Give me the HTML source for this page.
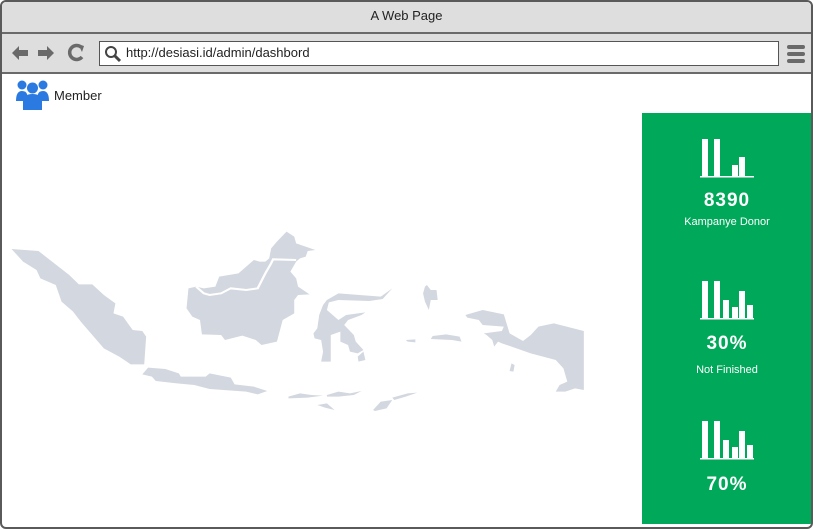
<!DOCTYPE html>
<html><head><style>
*{margin:0;padding:0;box-sizing:border-box}
body{width:813px;height:529px;background:#fff;font-family:"Liberation Sans",sans-serif;position:relative;overflow:hidden}
.win{position:absolute;left:0;top:0;width:813px;height:529px;border:2px solid #5a5a5a;border-radius:6px;overflow:hidden;background:#fff}
.title{position:absolute;left:0;top:0;width:100%;height:32px;background:#dedede;border-bottom:2px solid #6a6a6a;text-align:center;font-size:13px;line-height:28px;color:#222}
.tool{position:absolute;left:0;top:32px;width:100%;height:40px;background:#dedede;border-bottom:2px solid #6a6a6a}
.addr{position:absolute;left:97px;top:7px;width:680px;height:25px;border:1.5px solid #555;background:#fff;font-size:13px;line-height:22px;padding-left:26px;color:#222}
.green{position:absolute;left:640px;top:111px;width:170px;height:411px;background:#00a85a;color:#fff;text-align:center}
.num{position:absolute;left:0;width:100%;font-size:19px;font-weight:bold;letter-spacing:1px}
.lbl{position:absolute;left:0;width:100%;font-size:11px}
svg.m{position:absolute;left:-2px;top:223px;width:620px;height:220px;overflow:visible}
svg.m path{fill:#d3d7df}
</style></head><body>
<div class="win">
<div class="title">A Web Page</div>
<div class="tool">
<svg width="95" height="40" style="position:absolute;left:0;top:0">
<path d="M10 19 L17 12 L17 16 L26 16 L26 22 L17 22 L17 26 Z" fill="#6a6a6a"/>
<path d="M52 19 L45 12 L45 16 L36 16 L36 22 L45 22 L45 26 Z" fill="#6a6a6a"/>
<path d="M79 13 A7 7 0 1 0 80 23" stroke="#6a6a6a" stroke-width="3.5" fill="none"/>
<path d="M76 10 L82 12 L80 18 Z" fill="#6a6a6a"/>
</svg>
<div class="addr">http://desiasi.id/admin/dashbord
<svg width="20" height="20" style="position:absolute;left:4px;top:2px"><circle cx="7" cy="8" r="5" stroke="#444" stroke-width="2" fill="none"/><path d="M11 12 L16 17" stroke="#444" stroke-width="3"/></svg>
</div>
<svg width="22" height="22" style="position:absolute;left:784px;top:9px"><rect x="1" y="2" width="18" height="4" rx="2" fill="#6a6a6a"/><rect x="1" y="9" width="18" height="4" rx="2" fill="#6a6a6a"/><rect x="1" y="16" width="18" height="4" rx="2" fill="#6a6a6a"/></svg>
</div>
<svg width="34" height="32" style="position:absolute;left:14px;top:77px" fill="#2a7ae2">
<circle cx="6" cy="6" r="4.5"/><circle cx="27" cy="6" r="4.5"/><circle cx="16.5" cy="9" r="5.5"/>
<path d="M0 22 Q0 12 6 12 Q10 12 11 15 L11 22 Z"/><path d="M33 22 Q33 12 27 12 Q23 12 22 15 L22 22 Z"/>
<path d="M7 31 L7 22 Q7 15 16.5 15 Q26 15 26 22 L26 31 Z"/>
</svg>
<div style="position:absolute;left:52px;top:86px;font-size:13px;color:#222">Member</div>

<svg class="m"><g transform="scale(0.3846 0.3333)"><path d="M30 72 L100 78 L130 105 L180 150 L205 178 L240 178 L270 210 L300 235 L295 265 L320 275 L345 315 L370 318 L380 335 L375 418 L340 418 L310 395 L270 370 L240 330 L210 290 L190 260 L160 230 L145 180 L105 160 L95 135 L60 110 Z"/></g></svg>
<svg class="m"><g transform="scale(0.3846 0.3333)"><path d="M490 190 L485 250 L500 275 L520 285 L525 328 L575 330 L585 345 L630 332 L665 345 L680 360 L720 350 L735 285 L765 265 L765 225 L775 210 L805 208 L775 185 L770 160 L755 140 L770 110 L780 100 L795 95 L800 78 L820 75 L770 55 L765 35 L745 20 L720 50 L705 70 L700 100 L690 110 L675 110 L660 105 L620 145 L570 155 L560 185 L530 190 L510 185 Z"/><path d="M510 185 L530 205 L545 210 L575 205 L600 190 L640 195 L670 190 L690 145 L705 115 L710 103 L770 105" style="fill:none;stroke:#fff;stroke-width:6"/></g></svg>
<svg class="m"><g transform="scale(0.3846 0.3333)"><path d="M850 225 L880 205 L990 215 L1020 190 L995 222 L960 228 L880 225 L855 232 L850 255 L880 285 L900 270 L950 262 L940 270 L905 285 L895 300 L920 330 L925 350 L945 375 L930 385 L910 380 L905 360 L885 350 L885 320 L860 330 L860 410 L835 410 L840 380 L835 345 L818 340 L815 325 L825 310 L830 270 L840 240 Z"/></g></svg>
<svg class="m"><g transform="scale(0.3846 0.3333)"><path d="M930 395 L945 380 L950 405 L932 410 Z"/></g></svg>
<svg class="m"><g transform="scale(0.3846 0.3333)"><path d="M1105 185 L1110 180 L1120 195 L1135 195 L1138 225 L1120 225 L1115 255 L1105 230 L1100 205 Z"/></g></svg>
<svg class="m"><g transform="scale(0.3846 0.3333)"><path d="M1210 270 L1255 255 L1310 268 L1325 325 L1360 348 L1380 330 L1400 305 L1440 295 L1518 318 L1518 495 L1495 490 L1470 500 L1445 500 L1455 480 L1475 470 L1465 430 L1445 405 L1380 385 L1355 375 L1305 355 L1295 350 L1285 365 L1280 345 L1265 330 L1258 325 L1305 318 L1310 305 L1255 300 L1245 285 L1215 278 Z"/></g></svg>
<svg class="m"><g transform="scale(0.3846 0.3333)"><path d="M1125 333 L1160 328 L1195 335 L1200 350 L1175 345 L1120 342 Z"/><path d="M1055 345 L1080 343 L1080 352 L1060 350 Z"/></g></svg>
<svg class="m"><g transform="scale(0.3846 0.3333)"><path d="M385 428 L430 432 L465 445 L470 455 L535 455 L545 445 L600 458 L610 478 L660 485 L695 498 L670 508 L640 500 L545 492 L505 480 L460 475 L405 468 L395 455 L370 448 Z"/></g></svg>
<svg class="m"><g transform="scale(0.3846 0.3333)"><path d="M750 515 L780 505 L810 510 L840 512 L800 518 L750 520 Z"/><path d="M850 510 L880 500 L910 505 L940 498 L920 510 L880 515 L850 515 Z"/><path d="M825 540 L850 535 L870 555 L845 548 Z"/></g></svg>
<svg class="m"><g transform="scale(0.3846 0.3333)"><path d="M1020 518 L1060 505 L1085 503 L1055 515 L1025 525 Z"/><path d="M970 555 L990 530 L1020 525 L1005 550 L975 558 Z"/><path d="M1330 415 L1338 420 L1335 440 L1325 438 Z"/></g></svg>

<div class="green">
<svg width="56" height="42" style="position:absolute;left:58px;top:26px" fill="#fff"><rect x="2" y="0" width="6" height="38"/><rect x="14" y="0" width="6" height="38"/><rect x="32" y="26" width="6" height="12"/><rect x="39" y="18" width="6" height="20"/><rect x="0" y="37" width="54" height="1.5"/></svg>
<div class="num" style="top:77px">8390</div>
<div class="lbl" style="top:103px">Kampanye Donor</div>
<svg width="56" height="42" style="position:absolute;left:58px;top:168px" fill="#fff"><rect x="2" y="0" width="6" height="38"/><rect x="14" y="0" width="6" height="38"/><rect x="23" y="19" width="6" height="19"/><rect x="32" y="26" width="6" height="12"/><rect x="39" y="10" width="6" height="28"/><rect x="47" y="24" width="6" height="14"/><rect x="0" y="37" width="54" height="1.5"/></svg>
<div class="num" style="top:220px">30%</div>
<div class="lbl" style="top:251px">Not Finished</div>
<svg width="56" height="42" style="position:absolute;left:58px;top:308px" fill="#fff"><rect x="2" y="0" width="6" height="38"/><rect x="14" y="0" width="6" height="38"/><rect x="23" y="19" width="6" height="19"/><rect x="32" y="26" width="6" height="12"/><rect x="39" y="10" width="6" height="28"/><rect x="47" y="24" width="6" height="14"/><rect x="0" y="37" width="54" height="1.5"/></svg>
<div class="num" style="top:361px">70%</div>
</div>
</div>
</body></html>
